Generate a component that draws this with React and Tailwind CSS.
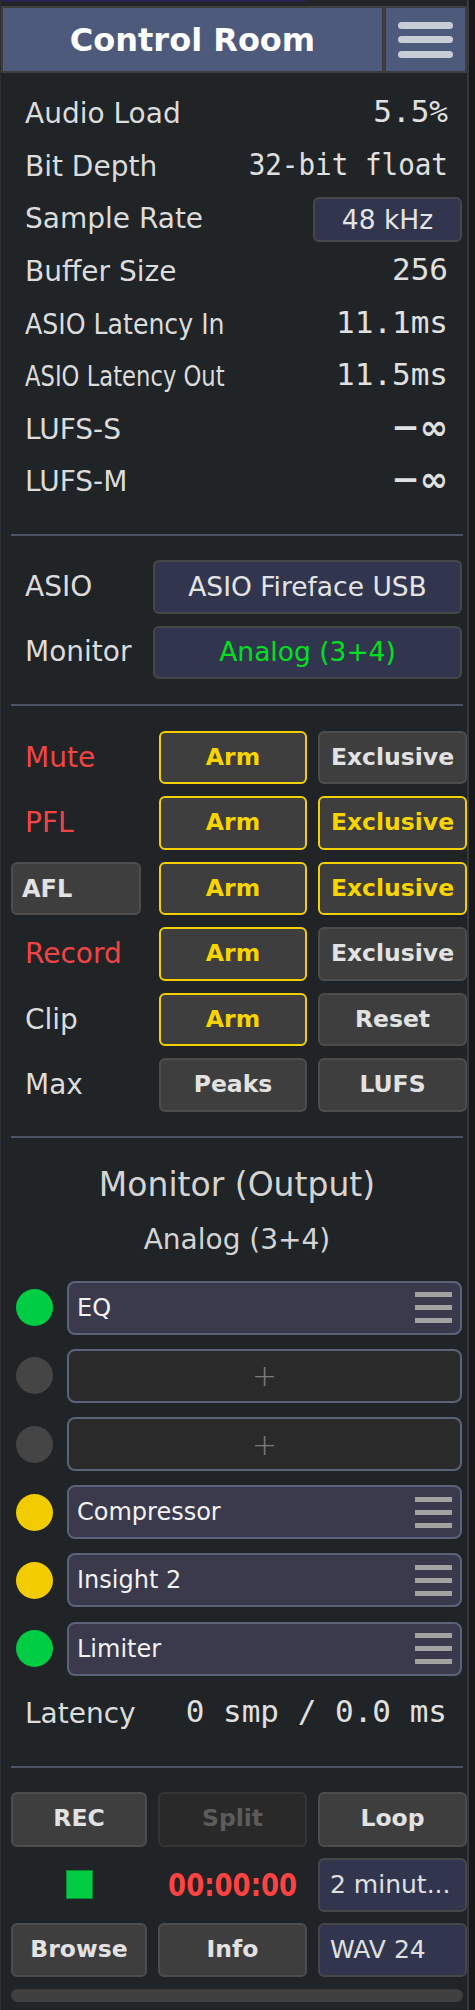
import React from "react";

const sans = "font-['DejaVu_Sans',sans-serif]";
const mono = "font-['DejaVu_Sans_Mono',monospace]";

const stats = [
  { label: "Audio Load", value: "5.5%" },
  { label: "Bit Depth", value: "32-bit float", squeeze: "scale-x-[0.89]" },
  { label: "Sample Rate", button: "48 kHz" },
  { label: "Buffer Size", value: "256" },
  { label: "ASIO Latency In", value: "11.1ms", labelSqueeze: "scale-x-[0.9]" },
  { label: "ASIO Latency Out", value: "11.5ms", labelSqueeze: "scale-x-[0.81]" },
  { label: "LUFS-S", inf: true },
  { label: "LUFS-M", inf: true },
];

const controls = [
  { label: "Mute", red: true, arm: true, right: "Exclusive", rightOn: false },
  { label: "PFL", red: true, arm: true, right: "Exclusive", rightOn: true },
  { label: "AFL", pill: true, arm: true, right: "Exclusive", rightOn: true },
  { label: "Record", red: true, arm: true, right: "Exclusive", rightOn: false },
  { label: "Clip", arm: true, right: "Reset", rightOn: false },
  { label: "Max", left: "Peaks", right: "LUFS", rightOn: false },
];

const slots = [
  { name: "EQ", dot: "bg-[#00cc44]" },
  { name: null, dot: "bg-[#454545]" },
  { name: null, dot: "bg-[#454545]" },
  { name: "Compressor", dot: "bg-[#f2cc00]" },
  { name: "Insight 2", dot: "bg-[#f2cc00]" },
  { name: "Limiter", dot: "bg-[#00cc44]" },
];

const grayBtn =
  "flex items-center justify-center rounded-[6px] border-2 border-[#4c4c4c] bg-[#3e3e3e] text-[23.5px] font-bold text-[#e2e2e2]";
const armBtn =
  "flex items-center justify-center rounded-[6px] border-2 border-[#f5d000] bg-[#3e3e3e] text-[23.5px] font-bold text-[#f8d400]";
const navyBtn =
  "flex items-center justify-center rounded-[6px] border-2 border-[#474747] bg-[#31364e] text-[26.5px] text-[#e4e4e4]";

const Divider = ({ className }) => (
  <div className={`ml-[10px] mr-[4px] h-[2px] bg-[#4b5466] ${className}`} />
);

const SlotMenu = () => (
  <div className="flex w-[37px] flex-col gap-[8px]">
    <div className="h-[5px] bg-[#a2a2a2]" />
    <div className="h-[5px] bg-[#a2a2a2]" />
    <div className="h-[5px] bg-[#a2a2a2]" />
  </div>
);

export default function App() {
  return (
    <div className={`min-h-screen bg-[#16181a] ${sans}`}>
      <div className="w-[469px] min-h-[2010px] border-l border-l-[#2b2e31] border-r-2 border-r-[#35383c] bg-[#202427]">
        {/* top strip */}
        <div className="h-[6px] bg-[#222528]">
          <div className="h-[2px] w-[305px] bg-[#27224f]" />
        </div>

        {/* header */}
        <div className="flex h-[67px]">
          <div className="flex flex-1 items-center justify-center border-2 border-[#3d3d3d] bg-[#4e5a7b] text-[32px] font-bold text-white">
            Control Room
          </div>
          <div className="flex w-[83px] flex-col items-center justify-center gap-[7.5px] border-2 border-[#3d3d3d] bg-[#4e5a7b]">
            <div className="h-[7px] w-[55px] rounded-full bg-[#c9cdd8]" />
            <div className="h-[7px] w-[55px] rounded-full bg-[#c9cdd8]" />
            <div className="h-[7px] w-[55px] rounded-full bg-[#c9cdd8]" />
          </div>
        </div>

        {/* stats */}
        <div className="mt-[15px] pl-[24px] pr-[5px]">
          {stats.map((s) => (
            <div key={s.label} className="flex h-[52.6px] items-center justify-between">
              <span
                className={`inline-block origin-left whitespace-nowrap text-[28px] leading-[34px] text-[#dcdcdc] ${s.labelSqueeze || ""}`}
              >
                {s.label}
              </span>
              {s.button ? (
                <div className={`${navyBtn} h-[45px] w-[149px]`}>{s.button}</div>
              ) : s.inf ? (
                <span className="mb-[6px] mr-[14px] text-[34px] font-bold leading-[40px] text-[#e0e0e0]">
                  −∞
                </span>
              ) : (
                <span
                  className={`mb-[6px] mr-[14px] inline-block origin-right whitespace-nowrap text-[31px] leading-[36px] text-[#e0e0e0] ${mono} ${s.squeeze || ""}`}
                >
                  {s.value}
                </span>
              )}
            </div>
          ))}
        </div>

        <Divider className="mt-[25px]" />

        {/* device */}
        <div className="mt-[24px] flex flex-col gap-[12px] pl-[24px] pr-[5px]">
          <div className="flex h-[54px] items-center justify-between">
            <span className="text-[28px] text-[#dcdcdc]">ASIO</span>
            <div className={`${navyBtn} h-full w-[309px]`}>ASIO Fireface USB</div>
          </div>
          <div className="flex h-[53px] items-center justify-between">
            <span className="text-[28px] text-[#dcdcdc]">Monitor</span>
            <div className={`${navyBtn} h-full w-[309px] !text-[#00e020]`}>Analog (3+4)</div>
          </div>
        </div>

        <Divider className="mt-[25px]" />

        {/* arm / exclusive grid */}
        <div className="mt-[25px] flex flex-col gap-[12px] pl-[10px]">
          {controls.map((c) => (
            <div key={c.label} className="flex h-[53.5px]">
              <div className="flex w-[148px] items-center">
                {c.pill ? (
                  <div className="flex h-full w-[130px] items-center rounded-[6px] border-2 border-[#4c4c4c] bg-[#3e3e3e] pl-[9px] text-[24px] font-bold text-[#e2e2e2]">
                    {c.label}
                  </div>
                ) : (
                  <span
                    className={`pl-[14px] text-[28px] ${c.red ? "text-[#f24444]" : "text-[#dcdcdc]"}`}
                  >
                    {c.label}
                  </span>
                )}
              </div>
              <div className={`${c.arm ? armBtn : grayBtn} w-[148px]`}>{c.arm ? "Arm" : c.left}</div>
              <div className={`${c.rightOn ? armBtn : grayBtn} ml-[11px] w-[149px]`}>{c.right}</div>
            </div>
          ))}
        </div>

        <Divider className="mt-[24px]" />

        {/* monitor chain */}
        <div className="ml-[10px] mr-[4px] mt-[27.5px] text-center text-[33px] leading-[40px] text-[#d4d4d4]">
          Monitor (Output)
        </div>
        <div className="ml-[10px] mr-[4px] mt-[17.7px] text-center text-[28px] leading-[34px] text-[#d4d4d4]">
          Analog (3+4)
        </div>

        <div className="mt-[23.7px] flex flex-col gap-[14.2px] pl-[15px] pr-[5px]">
          {slots.map((s, i) => (
            <div key={i} className="flex h-[54px] items-center gap-[14px]">
              <div className={`h-[37px] w-[37px] shrink-0 rounded-full ${s.dot}`} />
              {s.name ? (
                <div className="flex h-full flex-1 items-center justify-between rounded-[8px] border-2 border-[#5a6379] bg-[#3b3a4c] pl-[8px] pr-[8px]">
                  <span className="text-[24px] text-[#f2f2f2]">{s.name}</span>
                  <SlotMenu />
                </div>
              ) : (
                <div className="flex h-full flex-1 items-center justify-center rounded-[8px] border-2 border-[#5a6379] bg-[#2a2a2a] text-[30px] font-light text-[#7c7c7c]">
                  +
                </div>
              )}
            </div>
          ))}
        </div>

        <div className="mt-[12px] flex h-[52.6px] items-center justify-between pl-[24px] pr-[5px]">
          <span className="text-[28px] text-[#dcdcdc]">Latency</span>
          <span className={`mb-[6px] mr-[15px] whitespace-nowrap text-[31px] leading-[36px] text-[#e0e0e0] ${mono}`}>
            0 smp / 0.0 ms
          </span>
        </div>

        <Divider className="mt-[25.4px]" />

        {/* recorder */}
        <div className="mt-[24px] flex flex-col gap-[11px] pl-[10px]">
          <div className="flex h-[55px] gap-[11px]">
            <div className={`${grayBtn} w-[136px]`}>REC</div>
            <div className="flex w-[149px] items-center justify-center rounded-[6px] border-2 border-[#343434] bg-[#292929] text-[23.5px] font-bold text-[#5c5c5c]">
              Split
            </div>
            <div className={`${grayBtn} w-[149px]`}>Loop</div>
          </div>
          <div className="flex h-[54px] gap-[11px]">
            <div className="flex w-[136px] items-center justify-center">
              <div className="h-[29px] w-[27px] border border-[#0b8a32] bg-[#00cc44]" />
            </div>
            <div className="flex w-[149px] items-center justify-center">
              <span className="inline-block scale-x-[0.81] whitespace-nowrap text-[32px] font-bold text-[#ff4242]">
                00:00:00
              </span>
            </div>
            <div className="flex w-[149px] items-center whitespace-nowrap rounded-[6px] border-2 border-[#474747] bg-[#31364e] pl-[10px] text-[25px] text-[#e0e0e0]">
              2 minut...
            </div>
          </div>
          <div className="flex h-[54px] gap-[11px]">
            <div className={`${grayBtn} w-[136px]`}>Browse</div>
            <div className={`${grayBtn} w-[149px]`}>Info</div>
            <div className="flex w-[149px] items-center rounded-[6px] border-2 border-[#474747] bg-[#31364e] pl-[10px] text-[25px] text-[#e0e0e0]">
              WAV 24
            </div>
          </div>
        </div>

        <div className="ml-[10px] mr-[4px] mt-[12px] h-[13px] rounded-full bg-[#404040]" />
      </div>
    </div>
  );
}
